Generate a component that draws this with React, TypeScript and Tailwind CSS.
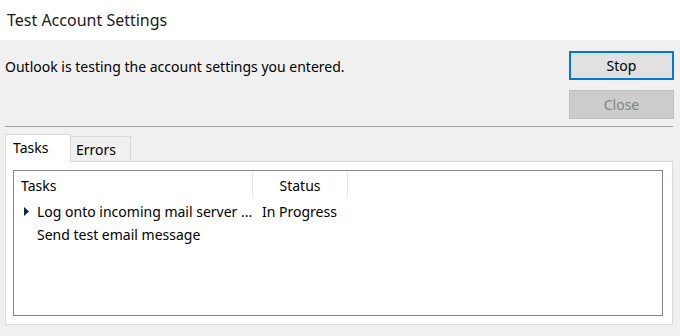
const font = { fontFamily: '"Noto Sans", "Open Sans", sans-serif' };

function Tab({ label, active }: { label: string; active?: boolean }) {
  return active ? (
    <div className="relative z-10 -mb-px flex h-[28px] w-[66px] items-start border border-b-0 border-[#d9d9d9] bg-white pl-[7px] pt-[3px]">
      {label}
    </div>
  ) : (
    <div className="flex h-[25px] w-[60px] items-start border border-b-0 border-l-0 border-[#d9d9d9] bg-[#f0f0f0] pl-[5px] pt-[3px]">
      {label}
    </div>
  );
}

export default function App() {
  return (
    <div className="flex h-[336px] w-[680px] flex-col bg-[#f0f0f0] text-[14px] text-black" style={font}>
      <div className="flex h-[40px] items-center bg-white pl-[7px] text-[16px] text-[#1a1a1a]">
        Test Account Settings
      </div>

      <div className="flex justify-between pl-[5px] pr-[6px]">
        <div className="mt-[17px] leading-[20px]">Outlook is testing the account settings you entered.</div>
        <div className="mt-[11px] flex flex-col gap-[10px]">
          <button type="button" className="h-[29px] w-[105px] border-2 border-[#0078d7] bg-[#e1e1e1] leading-none">
            Stop
          </button>
          <button type="button" className="h-[29px] w-[105px] border border-[#bfbfbf] bg-[#cccccc] leading-none text-[#838383]">
            Close
          </button>
        </div>
      </div>

      <div className="ml-[5px] mr-[7px] mt-[7px] h-px bg-[#a0a0a0]" />

      <div className="ml-[5px] mr-[7px] mt-[7px]">
        <div className="flex items-end leading-[20px]">
          <Tab label="Tasks" active />
          <Tab label="Errors" />
        </div>
        <div className="border border-[#d9d9d9] bg-white pb-[8px] pl-[7px] pr-[9px] pt-[8px]">
          <div className="h-[146px] border border-[#828790] bg-white">
            <div className="flex h-[29px] items-center">
              <div className="flex h-[25px] w-[239px] items-center border-r border-[#e5e5e5] pl-[7px]">Tasks</div>
              <div className="flex h-[25px] w-[95px] items-center justify-center border-r border-[#e5e5e5]">Status</div>
            </div>
            <div className="flex h-[23px] items-center">
              <div className="flex w-[239px] items-center pl-[10px]">
                <svg width="5" height="9" viewBox="0 0 5 9" className="mr-[8px] shrink-0">
                  <path d="M0 0L5 4.5L0 9Z" fill="#10215a" />
                </svg>
                <span className="whitespace-nowrap">Log onto incoming mail server ...</span>
              </div>
              <div className="pl-[9px] whitespace-nowrap">In Progress</div>
            </div>
            <div className="flex h-[23px] items-center pl-[23px]">Send test email message</div>
          </div>
        </div>
      </div>
    </div>
  );
}
